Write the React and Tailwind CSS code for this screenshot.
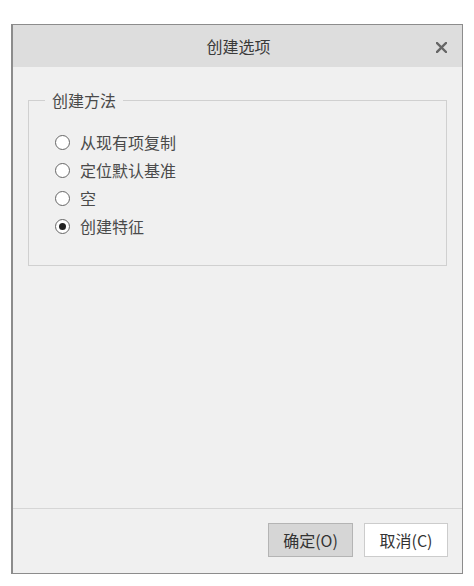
import React from "react";

const font = { fontFamily: '"Noto Sans CJK SC", "Noto Sans", sans-serif' };

function Radio({ label, checked }) {
  return (
    <div className="flex items-center h-[28px]">
      <span className="w-[15px] h-[15px] rounded-full border border-[#666] bg-white flex items-center justify-center -ml-[1px]">
        {checked && <span className="w-[7px] h-[7px] rounded-full bg-[#222]" />}
      </span>
      <span className="ml-[10px] text-[16px] leading-none text-[#4a4a4a]">{label}</span>
    </div>
  );
}

export default function App() {
  return (
    <div className="w-[474px] h-[586px] bg-white pt-[24px] pl-[11px]" style={font}>
      <div className="w-[452px] h-[550px] border border-l-2 border-[#8c8c8c] bg-[#f0f0f0] flex flex-col">
        <div className="h-[42px] bg-[#dddddd] flex items-center relative shrink-0">
          <div className="flex-1 text-center text-[16px] text-[#3a3a3a] pl-[2px]">创建选项</div>
          <svg className="absolute right-[15px] top-[17px]" width="11" height="11" viewBox="0 0 11 11">
            <path d="M1 1 L10 10 M10 1 L1 10" stroke="#666" strokeWidth="2.4" strokeLinecap="square" />
          </svg>
        </div>
        <div className="flex-1 pt-[22px] pl-[15px] pr-[15px]">
          <fieldset className="border border-[#d0d0d0] pl-[27px] pb-[24px] pt-[17px] h-[177px]">
            <legend className="-ml-[11px] px-[7px] text-[16px] leading-[22px] text-[#4a4a4a]">创建方法</legend>
            <Radio label="从现有项复制" />
            <Radio label="定位默认基准" />
            <Radio label="空" />
            <Radio label="创建特征" checked />
          </fieldset>
        </div>
        <div className="h-[65px] border-t border-[#d6d6d6] flex items-start justify-end pt-[14px] pr-[14px] gap-[11px] shrink-0">
          <button className="w-[85px] h-[34px] bg-[#d6d6d6] border border-[#b4b4b4] text-[16px] text-[#333]">确定(O)</button>
          <button className="w-[84px] h-[34px] bg-white border border-[#cccccc] text-[16px] text-[#333]">取消(C)</button>
        </div>
      </div>
    </div>
  );
}
